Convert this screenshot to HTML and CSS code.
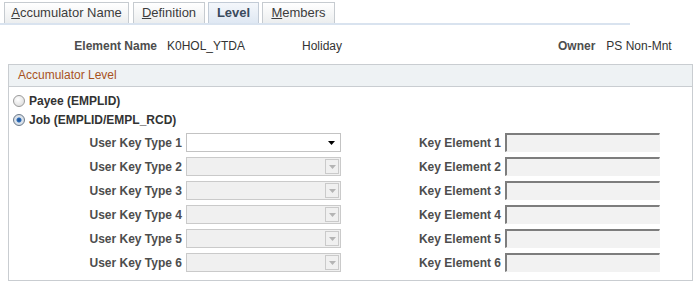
FILE: index.html
```html
<!DOCTYPE html>
<html>

<head>
    <meta charset="utf-8">
    <title>Accumulator Level</title>
    <link rel="stylesheet" href="styles.css">
</head>

<body>
    <div class="tabs">
        <a class="tab tab-name"><u>A</u>ccumulator Name</a>
        <a class="tab tab-def"><u>D</u>efinition</a>
        <a class="tab tab-level active">Level</a>
        <a class="tab tab-members"><u>M</u>embers</a>
    </div>

    <div class="element-row">
        <span class="lbl elem-lbl">Element Name</span>
        <span class="val elem-val">K0HOL_YTDA</span>
        <span class="val elem-desc">Holiday</span>
        <span class="lbl owner-lbl">Owner</span>
        <span class="val">PS Non-Mnt</span>
    </div>

    <div class="group">
        <div class="group-head">Accumulator Level</div>
        <div class="group-body">
            <label class="radio"><span class="dot"></span>Payee (EMPLID)</label>
            <label class="radio"><span class="dot on"></span>Job (EMPLID/EMPL_RCD)</label>

            <div class="keys">
                <span class="lbl">User Key Type 1</span>
                <div class="dd"><svg class="arrow" width="7" height="4"><path d="M0 0h7l-3.5 4z" fill="#000"/></svg></div>
                <span class="lbl">Key Element 1</span>
                <input class="key" disabled>

                <span class="lbl">User Key Type 2</span>
                <div class="dd off"><span class="btn"><svg width="7" height="4"><path d="M0 0h7l-3.5 4z" fill="#b4b4b4"/></svg></span></div>
                <span class="lbl">Key Element 2</span>
                <input class="key" disabled>

                <span class="lbl">User Key Type 3</span>
                <div class="dd off"><span class="btn"><svg width="7" height="4"><path d="M0 0h7l-3.5 4z" fill="#b4b4b4"/></svg></span></div>
                <span class="lbl">Key Element 3</span>
                <input class="key" disabled>

                <span class="lbl">User Key Type 4</span>
                <div class="dd off"><span class="btn"><svg width="7" height="4"><path d="M0 0h7l-3.5 4z" fill="#b4b4b4"/></svg></span></div>
                <span class="lbl">Key Element 4</span>
                <input class="key" disabled>

                <span class="lbl">User Key Type 5</span>
                <div class="dd off"><span class="btn"><svg width="7" height="4"><path d="M0 0h7l-3.5 4z" fill="#b4b4b4"/></svg></span></div>
                <span class="lbl">Key Element 5</span>
                <input class="key" disabled>

                <span class="lbl">User Key Type 6</span>
                <div class="dd off"><span class="btn"><svg width="7" height="4"><path d="M0 0h7l-3.5 4z" fill="#b4b4b4"/></svg></span></div>
                <span class="lbl">Key Element 6</span>
                <input class="key" disabled>
            </div>
        </div>
    </div>
</body>

</html>
```

FILE: styles.css
```css
body {
    margin: 0;
    background: #fff;
    color: #333;
    font-family: "Liberation Sans", Arial, sans-serif;
    font-size: 12px;
}

.tabs {
    display: flex;
    gap: 3px;
    width: 626px;
    padding: 2px 0 0 4px;
    height: 21px;
    border-bottom: 2px solid #d9e3ef;
}

.tab {
    box-sizing: border-box;
    height: 21px;
    line-height: 19px;
    text-align: center;
    font-size: 13px;
    color: #3c3c3c;
    border: 1px solid #c6cbd0;
    border-bottom: none;
    background: linear-gradient(#ffffff, #eceeef);
}

.tab u {
    text-decoration: underline;
}

.tab-name {
    width: 125px;
    margin-right: 1px;
}

.tab-def {
    width: 72px;
}

.tab-level {
    width: 51px;
}

.tab-members {
    width: 73px;
}

.tab.active {
    font-weight: bold;
    color: #3a4a5c;
    background: linear-gradient(#f4f7fb, #dfe8f3);
    border-color: #c2cbd6;
}

.element-row {
    display: flex;
    align-items: center;
    height: 20px;
    margin-top: 11px;
}

.lbl {
    font-weight: bold;
    color: #4d4d4d;
}

.val {
    color: #333;
}

.elem-lbl {
    width: 157px;
    text-align: right;
}

.elem-val {
    margin-left: 10px;
    width: 135px;
}

.elem-desc {
    width: 256px;
}

.owner-lbl {
    margin-right: 11px;
}

.group {
    margin: 8px 4px 0 8px;
    border: 1px solid #c9cdd1;
    height: 215px;
}

.group-head {
    height: 21px;
    line-height: 21px;
    padding-left: 9px;
    background: #eef2f4;
    border-bottom: 1px solid #c9cdd1;
    color: #a8521e;
    font-size: 12px;
}

.group-body {
    padding: 4px 0 0 4px;
}

.radio {
    display: flex;
    align-items: center;
    gap: 4px;
    height: 19px;
    font-weight: bold;
    color: #333;
}

.dot {
    box-sizing: border-box;
    width: 12px;
    height: 12px;
    border-radius: 50%;
    border: 1px solid #9a9a9a;
    background: radial-gradient(circle at 40% 35%, #ffffff, #d6d6d6);
}

.dot.on {
    border-color: #6b7a8a;
    background: radial-gradient(circle at 50% 50%, #1f4f8f 0, #2c6cb8 2px, #dfe6ee 3px, #c9d0d8 100%);
}

.keys {
    display: grid;
    grid-template-columns: 122px 155px 156px 155px;
    grid-auto-rows: 19px;
    column-gap: 4px;
    row-gap: 5px;
    align-items: center;
    margin: 4px 0 0 47px;
}

.keys .lbl {
    text-align: right;
}

.dd {
    box-sizing: border-box;
    height: 19px;
    border: 1px solid #c3c3c3;
    background: #fff;
    position: relative;
}

.dd .arrow {
    position: absolute;
    right: 5px;
    top: 7px;
}

.dd.off {
    background: #f0f0f0;
    border-color: #cacaca;
}

.dd .btn {
    position: absolute;
    right: 1px;
    top: 1px;
    width: 14px;
    height: 15px;
    box-sizing: border-box;
    border: 1px solid #cacaca;
    display: flex;
    align-items: center;
    justify-content: center;
}

.key {
    box-sizing: border-box;
    margin: 0;
    width: 155px;
    height: 19px;
    background: #f2f2f2;
    border-top: 2px solid #7d7d7d;
    border-left: 2px solid #7d7d7d;
    border-right: 1px solid #f2f2f2;
    border-bottom: 1px solid #f2f2f2;
}
```
